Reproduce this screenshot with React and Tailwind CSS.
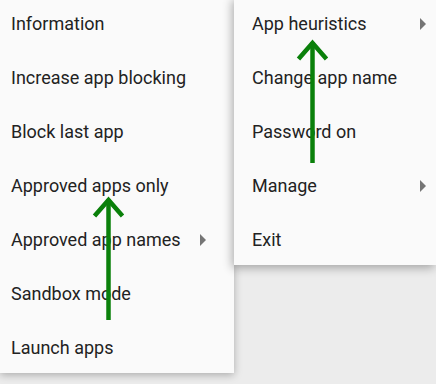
const leftItems = [
  { label: 'Information' },
  { label: 'Increase app blocking' },
  { label: 'Block last app' },
  { label: 'Approved apps only' },
  { label: 'Approved app names', sub: true },
  { label: 'Sandbox mode' },
  { label: 'Launch apps' },
];

const rightItems = [
  { label: 'App heuristics', sub: true },
  { label: 'Change app name' },
  { label: 'Password on' },
  { label: 'Manage', sub: true },
  { label: 'Exit' },
];

function Caret() {
  return (
    <svg width="6" height="12" viewBox="0 0 6 12" className="shrink-0">
      <path d="M0 0 L6 6 L0 12 Z" fill="#757575" />
    </svg>
  );
}

function MenuRow({ item, textPad, caretPad }) {
  return (
    <div className={`flex items-center justify-between h-[54px] shrink-0 ${textPad} ${caretPad}`}>
      <span className="text-[18px] leading-[24px] text-[#222222] whitespace-nowrap">{item.label}</span>
      {item.sub && <Caret />}
    </div>
  );
}

function Arrow({ x, top, bottom }) {
  return (
    <g stroke="#0a800a" fill="none">
      <line x1={x} y1={top + 2} x2={x} y2={bottom} strokeWidth="4.5" />
      <polyline points={`${x - 14},${top + 19} ${x},${top + 3} ${x + 14},${top + 19}`} strokeWidth="4.5" strokeLinejoin="miter" />
    </g>
  );
}

export default function App() {
  return (
    <div
      className="relative w-[436px] h-[384px] overflow-hidden bg-[#ececec]"
      style={{ fontFamily: 'Roboto, "Liberation Sans", sans-serif' }}
    >
      <div className="flex items-start">
        <div className="flex flex-col w-[234px] h-[376px] overflow-hidden -mt-[3px] bg-[#fafafa] shadow-[0_2px_8px_rgba(0,0,0,0.28)]">
          {leftItems.map((item) => (
            <MenuRow key={item.label} item={item} textPad="pl-[11px]" caretPad="pr-[28px]" />
          ))}
        </div>
        <div className="relative z-10 flex flex-col flex-1 h-[268px] overflow-hidden -mt-[3px] bg-[#fafafa] shadow-[-2px_3px_9px_rgba(0,0,0,0.3)]">
          {rightItems.map((item) => (
            <MenuRow key={item.label} item={item} textPad="pl-[18px]" caretPad="pr-[10px]" />
          ))}
        </div>
      </div>
      <svg className="absolute inset-0 z-20 pointer-events-none" width="436" height="384">
        <Arrow x={108.5} top={197} bottom={320} />
        <Arrow x={312.5} top={40} bottom={163} />
      </svg>
    </div>
  );
}
